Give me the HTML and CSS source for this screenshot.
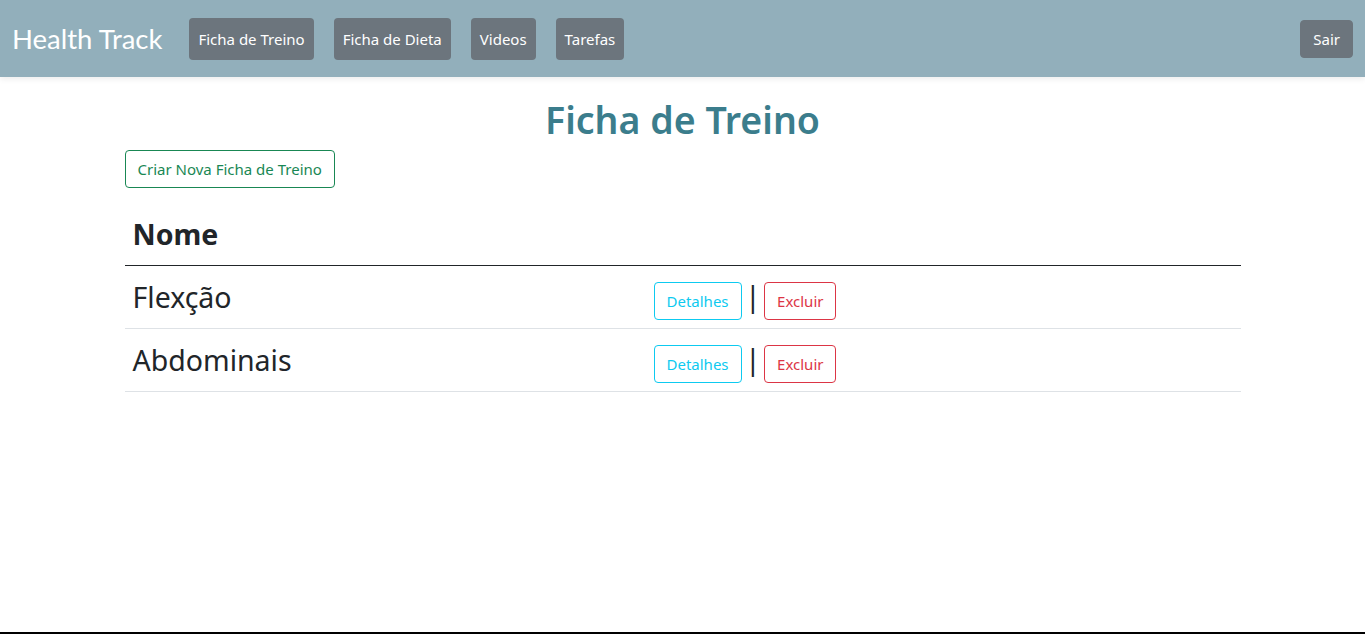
FILE: index.html
```html
<!DOCTYPE html>
<html lang="pt-BR">
<head>
<meta charset="utf-8">
<title>Health Track</title>
<link rel="stylesheet" href="styles.css">
</head>
<body>
<header class="navbar">
  <a class="brand" href="#">Health Track</a>
  <nav class="nav-links">
    <a class="nav-btn" href="#">Ficha de Treino</a>
    <a class="nav-btn" href="#">Ficha de Dieta</a>
    <a class="nav-btn" href="#">Videos</a>
    <a class="nav-btn" href="#">Tarefas</a>
  </nav>
  <a class="btn btn-secondary" href="#">Sair</a>
</header>
<main class="container">
  <h1 class="page-title">Ficha de Treino</h1>
  <a class="btn btn-outline-success" href="#">Criar Nova Ficha de Treino</a>
  <table class="table">
    <thead>
      <tr><th class="col-name">Nome</th><th></th></tr>
    </thead>
    <tbody>
      <tr>
        <td>Flexção</td>
        <td class="actions"><a class="btn btn-outline-info" href="#">Detalhes</a> | <a class="btn btn-outline-danger" href="#">Excluir</a></td>
      </tr>
      <tr>
        <td>Abdominais</td>
        <td class="actions"><a class="btn btn-outline-info" href="#">Detalhes</a> | <a class="btn btn-outline-danger" href="#">Excluir</a></td>
      </tr>
    </tbody>
  </table>
</main>
<footer class="footer"></footer>
</body>
</html>
```
FILE: styles.css
```css
*, *::before, *::after { box-sizing: border-box; }
html, body { margin: 0; padding: 0; }
body {
  font-family: "Noto Sans", "Open Sans", sans-serif;
  font-size: 16px;
  line-height: 1.5;
  color: #212529;
  background: #fff;
  min-height: 100vh;
  display: flex;
  flex-direction: column;
}
a { text-decoration: none; }

.navbar {
  background: #92afbb;
  height: 77px;
  padding: 0 12px;
  display: flex;
  align-items: center;
  box-shadow: 0 2px 6px rgba(0,0,0,0.08);
}
.brand {
  font-family: "Lato", sans-serif;
  font-size: 27.5px;
  color: #fff;
  margin-right: 27px;
  line-height: 1;
}
.nav-links {
  display: flex;
  gap: 20px;
  flex: 1;
}
.nav-btn {
  display: inline-block;
  background: #6c757d;
  color: #fff;
  border-radius: 4px;
  height: 42px;
  line-height: 42px;
  padding: 0 9px;
  font-size: 15px;
}

.btn {
  display: inline-block;
  font-size: 15px;
  line-height: 24px;
  padding: 6px 12px;
  border: 1px solid transparent;
  border-radius: 4px;
  vertical-align: baseline;
  word-spacing: normal;
}
.btn-secondary { background: #6c757d; color: #fff; border-color: #6c757d; }
.btn-outline-success { color: #198754; border-color: #198754; }
.btn-outline-info { color: #0dcaf0; border-color: #0dcaf0; }
.btn-outline-danger { color: #dc3545; border-color: #dc3545; }

.container {
  width: 1140px;
  margin: 0 auto;
  padding: 0 12px;
  flex: 1;
}
.page-title {
  text-align: center;
  color: #3b7d8c;
  font-size: 37.5px;
  font-weight: 600;
  line-height: 1.2;
  margin: 20px 0 8px;
}
.table {
  width: 100%;
  border-collapse: collapse;
  margin-top: 16px;
}
.table th, .table td {
  padding: 8px 8px 8px;
  font-size: 28.5px;
  line-height: 45px;
  text-align: left;
  border-bottom: 1px solid #dee2e6;
}
.table thead th {
  font-weight: 700;
  padding-bottom: 8px;
  border-bottom-color: #212529;
}
.actions { word-spacing: -4px; }
.col-name { width: 521px; }

.footer {
  border-top: 2px solid #000;
}
```
